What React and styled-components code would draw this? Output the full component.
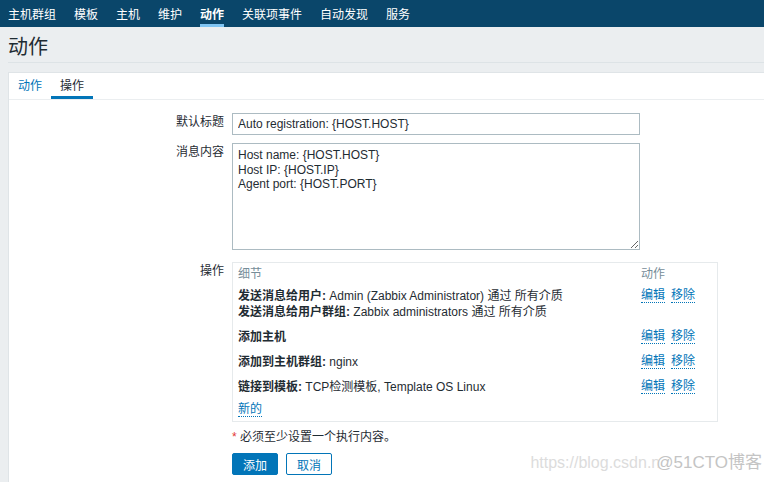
import React from 'react';
import styled, { createGlobalStyle } from 'styled-components';

const GlobalStyle = createGlobalStyle`
  html, body {
    margin: 0;
    padding: 0;
    height: 100%;
    overflow: hidden;
    background-color: #ebeef0;
    font-family: "Liberation Sans", Arial, "Noto Sans CJK SC", sans-serif;
    font-size: 12px;
    color: #1f2c33;
  }

  * {
    box-sizing: border-box;
  }
`;

const Page = styled.div`
  position: relative;
  display: flex;
  flex-direction: column;
  height: 482px;
`;

const TopNav = styled.nav`
  display: flex;
  height: 27px;
  padding-left: 8px;
  background-color: #0a466a;
`;

const NavItem = styled.a`
  display: flex;
  align-items: center;
  height: 27px;
  margin-right: 18px;
  padding-top: 3px;
  border-bottom: 3px solid ${(p) => (p.$active ? '#7fc4f2' : 'transparent')};
  color: #ffffff;
  font-size: 12px;
  font-weight: ${(p) => (p.$active ? 'bold' : 'normal')};
  text-decoration: none;
`;

const Header = styled.div`
  display: flex;
  align-items: center;
  height: 36px;
  margin: 0 0 0 8px;
  padding-top: 2px;
  border-bottom: 1px solid #dde3e6;
`;

const Title = styled.h1`
  margin: 0;
  font-size: 20px;
  font-weight: normal;
  color: #1f2c33;
`;

const Panel = styled.div`
  flex: 1;
  margin: 9px 0 0 8px;
  background-color: #ffffff;
  border: 1px solid #dfe4e7;
  border-right: none;
  border-bottom: none;
`;

const TabBar = styled.div`
  display: flex;
  border-bottom: 1px solid #ebeef0;
`;

const Tab = styled.a`
  display: flex;
  align-items: center;
  height: 26px;
  padding: 0 9px 1px;
  border-bottom: 3px solid ${(p) => (p.$active ? '#0275b8' : 'transparent')};
  color: ${(p) => (p.$active ? '#1f2c33' : '#0275b8')};
  text-decoration: none;
`;

const Form = styled.div`
  display: grid;
  grid-template-columns: 215px 1fr;
  column-gap: 8px;
  padding-top: 13px;
`;

const Label = styled.div`
  padding-top: 2px;
  line-height: 14px;
  text-align: right;
  margin-bottom: ${(p) => p.$space || 0}px;
`;

const Field = styled.div`
  margin-bottom: ${(p) => p.$space || 0}px;
`;

const TextInput = styled.input`
  display: block;
  width: 408px;
  height: 22px;
  padding: 0 5px;
  border: 1px solid #acbbc2;
  font-family: inherit;
  font-size: 12px;
  color: #1f2c33;
  outline: none;
`;

const TextArea = styled.textarea`
  display: block;
  width: 408px;
  height: 107px;
  padding: 4px 5px;
  border: 1px solid #acbbc2;
  font-family: inherit;
  font-size: 12px;
  line-height: 14.5px;
  color: #1f2c33;
  outline: none;
`;

const OpsBox = styled.div`
  width: 486px;
  padding: 0 5px;
  border: 1px solid #e6eaec;
`;

const OpsRow = styled.div`
  display: grid;
  grid-template-columns: 1fr 71px;
  padding: ${(p) => p.$pad || '5px 0 4px'};
  line-height: 16px;
`;

const HeadCell = styled.div`
  color: #768d99;
`;

const Bold = styled.b`
  font-weight: bold;
`;

const Actions = styled.div`
  display: flex;
  align-items: flex-start;
  gap: 6px;
`;

const Link = styled.a`
  color: #0275b8;
  text-decoration: none;
  border-bottom: 1px dotted #0275b8;
  line-height: 14px;
  cursor: pointer;
`;

const Hint = styled.div`
  margin: 7px 0 8px;
  line-height: 16px;
`;

const Red = styled.span`
  color: #e33734;
`;

const Buttons = styled.div`
  display: flex;
  gap: 8px;
`;

const Button = styled.button`
  height: 22px;
  padding: 0 10px;
  border: 1px solid #0275b8;
  border-radius: 2px;
  background-color: ${(p) => (p.$primary ? '#0275b8' : '#ffffff')};
  color: ${(p) => (p.$primary ? '#ffffff' : '#0275b8')};
  font-family: inherit;
  font-size: 12px;
  cursor: pointer;
`;

const Watermark = styled.div`
  position: absolute;
  right: 2px;
  bottom: 9px;
  display: flex;
  align-items: baseline;
  pointer-events: none;
  white-space: nowrap;
`;

const WaterUrl = styled.span`
  font-size: 16px;
  color: #dcdcdc;
`;

const WaterSite = styled.span`
  margin-left: -4px;
  font-size: 17px;
  color: #c4c4c4;
  text-shadow: 0 0 2px #ffffff;
`;

const navItems = ['主机群组', '模板', '主机', '维护', '动作', '关联项事件', '自动发现', '服务'];

const operations = [
  {
    lines: [
      { bold: '发送消息给用户:', text: ' Admin (Zabbix Administrator) 通过 所有介质' },
      { bold: '发送消息给用户群组:', text: ' Zabbix administrators 通过 所有介质' },
    ],
  },
  { lines: [{ bold: '添加主机', text: '' }] },
  { lines: [{ bold: '添加到主机群组:', text: ' nginx' }] },
  { lines: [{ bold: '链接到模板:', text: ' TCP检测模板, Template OS Linux' }] },
];

const App = () => {
  return (
    <Page>
      <GlobalStyle />
      <TopNav>
        {navItems.map((item) => (
          <NavItem key={item} $active={item === '动作'}>{item}</NavItem>
        ))}
      </TopNav>
      <Header>
        <Title>动作</Title>
      </Header>
      <Panel>
        <TabBar>
          <Tab>动作</Tab>
          <Tab $active>操作</Tab>
        </TabBar>
        <Form>
          <Label $space={8}>默认标题</Label>
          <Field $space={8}>
            <TextInput defaultValue="Auto registration: {HOST.HOST}" />
          </Field>

          <Label $space={12}>消息内容</Label>
          <Field $space={12}>
            <TextArea defaultValue={'Host name: {HOST.HOST}\nHost IP: {HOST.IP}\nAgent port: {HOST.PORT}'} />
          </Field>

          <Label>操作</Label>
          <Field>
            <OpsBox>
              <OpsRow $pad="3px 0 1px">
                <HeadCell>细节</HeadCell>
                <HeadCell>动作</HeadCell>
              </OpsRow>
              {operations.map((op, i) => (
                <OpsRow key={i}>
                  <div>
                    {op.lines.map((line) => (
                      <div key={line.bold}>
                        <Bold>{line.bold}</Bold>{line.text}
                      </div>
                    ))}
                  </div>
                  <Actions>
                    <Link>编辑</Link>
                    <Link>移除</Link>
                  </Actions>
                </OpsRow>
              ))}
              <OpsRow $pad="2px 0 4px">
                <div>
                  <Link>新的</Link>
                </div>
              </OpsRow>
            </OpsBox>
            <Hint>
              <Red>*</Red> 必须至少设置一个执行内容。
            </Hint>
            <Buttons>
              <Button $primary>添加</Button>
              <Button>取消</Button>
            </Buttons>
          </Field>
        </Form>
      </Panel>
      <Watermark>
        <WaterUrl>https://blog.csdn.n</WaterUrl>
        <WaterSite>@51CTO博客</WaterSite>
      </Watermark>
    </Page>
  );
};

export default App;
